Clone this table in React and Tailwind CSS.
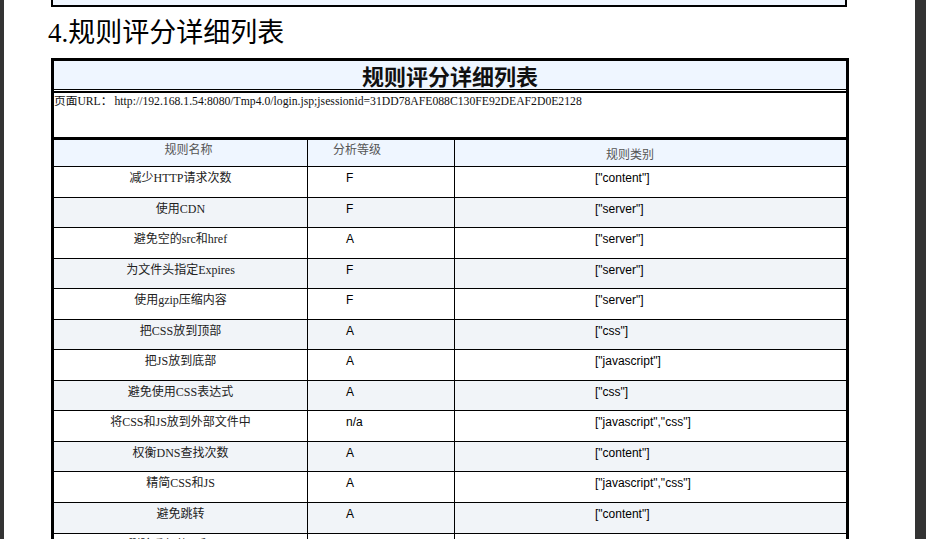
import React from "react";

const serif = { fontFamily: '"Liberation Serif", "Noto Sans CJK SC", serif' };
const arial = { fontFamily: '"Liberation Sans", "Noto Sans CJK SC", sans-serif' };

const rows = [
  ["减少HTTP请求次数", "F", '["content"]'],
  ["使用CDN", "F", '["server"]'],
  ["避免空的src和href", "A", '["server"]'],
  ["为文件头指定Expires", "F", '["server"]'],
  ["使用gzip压缩内容", "F", '["server"]'],
  ["把CSS放到顶部", "A", '["css"]'],
  ["把JS放到底部", "A", '["javascript"]'],
  ["避免使用CSS表达式", "A", '["css"]'],
  ["将CSS和JS放到外部文件中", "n/a", '["javascript","css"]'],
  ["权衡DNS查找次数", "A", '["content"]'],
  ["精简CSS和JS", "A", '["javascript","css"]'],
  ["避免跳转", "A", '["content"]'],
  ["删除重复的JS和CSS", "A", '["javascript","css"]'],
];

export default function App() {
  return (
    <div className="flex h-[539px] w-[926px] overflow-hidden bg-white">
      <div className="w-[4px] shrink-0 bg-[#333333]" />
      <div className="flex-1">
        <div className="ml-[47px] h-[7px] w-[796px] border-x-2 border-b-2 border-black bg-[#eff6ff]" />
        <div
          className="ml-[44px] mt-[11px] h-[30px] whitespace-nowrap text-[27px] leading-[30px] text-black"
          style={serif}
        >
          4.规则评分详细列表
        </div>
        <div className="ml-[47px] mt-[10px] w-[798px] border-[3px] border-black">
          <div className="flex h-[29px] items-center justify-center border-b border-black bg-[#eff6ff]">
            <span
              className="text-[22px] font-bold leading-none text-[#111]"
              style={{ fontFamily: '"Noto Sans CJK SC", sans-serif' }}
            >
              规则评分详细列表
            </span>
          </div>
          <div className="h-[1px] bg-white" />
          <div
            className="h-[49px] whitespace-nowrap border-t-2 border-b-[3px] border-black pt-[2px] text-[11.7px] leading-[14px] text-[#111]"
            style={serif}
          >
            <span>页面URL：</span>
            <span className="ml-[2px]">
              http://192.168.1.54:8080/Tmp4.0/login.jsp;jsessionid=31DD78AFE088C130FE92DEAF2D0E2128
            </span>
          </div>
          <div className="flex h-[27px] border-b border-black bg-[#eff6ff] text-[12px] leading-[14px] text-[#555]" style={serif}>
            <div className="w-[254px] shrink-0 border-r border-black pl-[16px] pt-[3px] text-center">规则名称</div>
            <div className="w-[147px] shrink-0 border-r border-black pl-[25px] pt-[3px]">分析等级</div>
            <div className="flex-1 pl-[151px] pt-[8px]">规则类别</div>
          </div>
          {rows.map((r, i) => (
            <div
              key={i}
              className={`flex h-[30.55px] border-b border-black text-[12px] leading-[14px] ${
                i % 2 === 1 ? "bg-[#f1f4f8]" : "bg-white"
              }`}
            >
              <div
                className="w-[254px] shrink-0 border-r border-black pt-[4px] text-center text-[#222]"
                style={serif}
              >
                {r[0]}
              </div>
              <div
                className="w-[147px] shrink-0 border-r border-black pl-[38px] pt-[4px] text-black"
                style={arial}
              >
                {r[1]}
              </div>
              <div className="flex-1 pl-[140px] pt-[4px] text-black" style={arial}>
                {r[2]}
              </div>
            </div>
          ))}
        </div>
      </div>
      <div className="w-[11px] shrink-0 bg-[#333333]" />
    </div>
  );
}
